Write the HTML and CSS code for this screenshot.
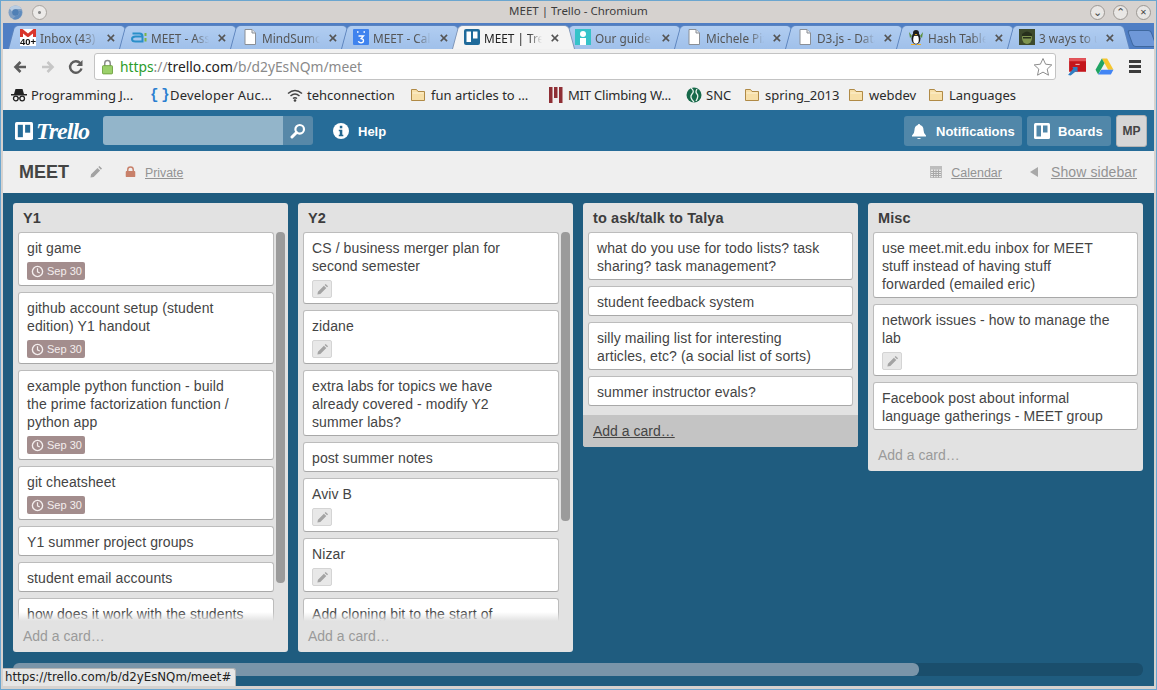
FILE: index.html
```html
<!DOCTYPE html>
<html lang="en">
<head>
	<meta charset="UTF-8">
	<title>MEET | Trello - Chromium</title>
	<link rel="stylesheet" href="styles.css">
</head>
<body>
<svg class="defs" width="0" height="0">
	<symbol id="doc" viewBox="0 0 16 16"><path d="M3 .5h7l3.500 3.500v11.500h-10.500z" fill="#fff" stroke="#8a8f96"/><path d="M10 .5v3.500h3.500" fill="#e4e6e9" stroke="#8a8f96"/></symbol>
	<symbol id="folder" viewBox="0 0 16 16"><path d="M1.500 13.500v-11h5l1.500 2h6.500v9z" fill="#f7dfa8" stroke="#b08a46"/><path d="M2.500 6h11" stroke="#fdf1d2"/></symbol>
	<symbol id="pencil" viewBox="0 0 14 14"><path d="M1.500 12.500l.6-3.200 6.400-6.400 2.600 2.600-6.400 6.400zM9.300 2.100l1.100-1.100 2.600 2.600-1.100 1.100z" fill="#a3a3a3"/></symbol>
	<symbol id="clock" viewBox="0 0 14 14"><circle cx="7" cy="7" r="5.500" fill="none" stroke="#f4eeee" stroke-width="1.500"/><path d="M7 3.500v3.800l2.400 1.300" fill="none" stroke="#f4eeee" stroke-width="1.300"/></symbol>
	<symbol id="boards" viewBox="0 0 16 16"><rect width="16" height="16" rx="1.500" fill="#fff"/><rect x="2.500" y="2.500" width="4.500" height="11" fill="currentColor"/><rect x="9" y="2.500" width="4.500" height="7" fill="currentColor"/></symbol>
</svg>

<div class="window">
	<!-- window title -->
	<div class="titlebar">
		<svg class="wm-logo" viewBox="0 0 16 16"><circle cx="8" cy="8" r="7.500" fill="#7f9fc4"/><path d="M8 .5a7.500 7.500 0 0 1 6.500 3.700h-6.500a4 4 0 0 0-3.800 2.800l-2.600-3.500a7.500 7.500 0 0 1 6.400-3z" fill="#b9cde3"/><circle cx="8" cy="8" r="3.500" fill="#4f7fb5"/><path d="M8 15.500a7.500 7.500 0 0 1-3-.6l3.500-3.400a3.500 3.500 0 0 0 3-5.500h3a7.500 7.500 0 0 1-6.500 9.500z" fill="#5f8bbd"/></svg>
		<span class="wm-pin"></span>
		<span class="wm-title">MEET | Trello - Chromium</span>
		<span class="wm-btn">&#8964;</span>
		<span class="wm-btn">&#8963;</span>
		<span class="wm-btn">&#215;</span>
	</div>

	<!-- browser tabs -->
	<div class="tabstrip">
		<div class="tab">
			<svg class="fav" viewBox="0 0 16 16"><rect x="0" y="0" width="16" height="10" fill="#fff"/><path d="M0 0h2.500l5.500 4.500 5.500-4.500h2.500v9h-3v-4.500l-5 4-5-4v4.500h-3z" fill="#d9352b"/></svg>
			<span class="fav-count">40+</span>
			<span class="tab-name">Inbox (43)</span><span class="tab-x">&#215;</span>
		</div>
		<div class="tab">
			<svg class="fav" viewBox="0 0 16 16"><path d="M1.500 4.500h7q3 0 3 3v5h-7q-3.500 0-3.500-2.500t3.500-2.500h6" fill="none" stroke="#2a8fc9" stroke-width="2"/><rect x="13.500" y="4" width="2" height="3" fill="#7cb342"/><rect x="13.500" y="9" width="2" height="3.500" fill="#7cb342"/></svg>
			<span class="tab-name">MEET - Assembla</span><span class="tab-x">&#215;</span>
		</div>
		<div class="tab">
			<svg class="fav"><use href="#doc"/></svg>
			<span class="tab-name">MindSumo</span><span class="tab-x">&#215;</span>
		</div>
		<div class="tab">
			<svg class="fav" viewBox="0 0 16 16"><rect width="16" height="16" rx="1" fill="#3f83ee"/><rect x="4" y="2" width="1.500" height="2" fill="#cfe0fb"/><rect x="10.500" y="2" width="1.500" height="2" fill="#cfe0fb"/><path d="M5.500 7h5l-2.300 2.500q2.300 .3 2.300 2.300 0 2-2.500 2-2 0-2.700-1.500" fill="none" stroke="#fff" stroke-width="1.300"/></svg>
			<span class="tab-name">MEET - Calendar</span><span class="tab-x">&#215;</span>
		</div>
		<div class="tab active">
			<svg class="fav boards-fav" viewBox="0 0 16 16"><rect width="16" height="16" rx="2" fill="#1f6a9a"/><rect x="2.500" y="2.500" width="4.500" height="10.500" fill="#fff"/><rect x="9" y="2.500" width="4.500" height="7" fill="#fff"/></svg>
			<span class="tab-name">MEET | Trello</span><span class="tab-x">&#215;</span>
		</div>
		<div class="tab">
			<svg class="fav" viewBox="0 0 16 16"><rect width="16" height="16" fill="#35c3c9"/><circle cx="8" cy="5" r="3" fill="#fff"/><rect x="5" y="9" width="6" height="7" fill="#fff"/></svg>
			<span class="tab-name">Our guide to</span><span class="tab-x">&#215;</span>
		</div>
		<div class="tab">
			<svg class="fav"><use href="#doc"/></svg>
			<span class="tab-name">Michele Pizzolato</span><span class="tab-x">&#215;</span>
		</div>
		<div class="tab">
			<svg class="fav"><use href="#doc"/></svg>
			<span class="tab-name">D3.js - Data</span><span class="tab-x">&#215;</span>
		</div>
		<div class="tab">
			<svg class="fav" viewBox="0 0 16 16"><ellipse cx="8" cy="9.500" rx="4.500" ry="6" fill="#1d1d1d"/><ellipse cx="8" cy="10.500" rx="2.800" ry="4.300" fill="#fff"/><circle cx="8" cy="4" r="3" fill="#1d1d1d"/><path d="M6.500 5h3l-1.500 1.500z" fill="#f2b01e"/><path d="M1 3l3 4-2 2zM15 3l-3 4 2 2z" fill="#5a8f3a"/><path d="M3 15h4v1h-4zM9 15h4v1h-4z" fill="#f2b01e"/></svg>
			<span class="tab-name">Hash Tables</span><span class="tab-x">&#215;</span>
		</div>
		<div class="tab">
			<svg class="fav" viewBox="0 0 16 16"><rect width="16" height="16" fill="#3d4a2c"/><ellipse cx="8" cy="9" rx="5" ry="6" fill="#7f9550"/><path d="M3 5q5-5 10 0v2h-10z" fill="#27301c"/><rect x="4" y="8" width="8" height="1.500" fill="#27301c"/></svg>
			<span class="tab-name">3 ways to use</span><span class="tab-x">&#215;</span>
		</div>
		<div class="tab-new"></div>
	</div>

	<!-- back / forward / address -->
	<div class="toolbar">
		<svg class="tool" viewBox="0 0 16 16"><path d="M14 8h-9M8.500 3l-5 5 5 5" fill="none" stroke="#5c5c5c" stroke-width="2.600"/></svg>
		<svg class="tool" viewBox="0 0 16 16"><path d="M2 8h9M7.500 3l5 5-5 5" fill="none" stroke="#c6c6c6" stroke-width="2.600"/></svg>
		<svg class="tool" viewBox="0 0 16 16"><path d="M13.500 9.500a5.800 5.800 0 1 1-1.200-5.300" fill="none" stroke="#5c5c5c" stroke-width="2.400"/><path d="M14.500 1v6h-6z" fill="#5c5c5c"/></svg>
		<div class="omnibox">
			<svg class="lock" viewBox="0 0 12 16"><path d="M3 7v-3a3 3 0 0 1 6 0v3" fill="none" stroke="#8c8c8c" stroke-width="1.600"/><rect x=".5" y="6.500" width="11" height="9" rx="1" fill="#9bd06a" stroke="#6ea13f"/></svg>
			<span class="url"><span class="https">https</span><span class="dim">://</span>trello.com<span class="dim">/b/d2yEsNQm/meet</span></span>
			<svg class="star" viewBox="0 0 20 20"><path d="M10 1.500l2.600 5.700 6.200.7-4.600 4.200 1.300 6.100-5.500-3.100-5.500 3.100 1.300-6.100-4.600-4.200 6.200-.7z" fill="#fff" stroke="#8d8d8d"/></svg>
		</div>
		<svg class="ext" viewBox="0 0 18 18"><rect x="2" y="1" width="16" height="13" fill="#c4161c"/><rect x="2" y="1" width="16" height="3" fill="#e2555a"/><path d="M8 7h4" stroke="#f3b9bb"/><path d="M1 17l5-6-1-1.500h5v5l-1.500-1-5 4z" fill="#2f7fc4"/></svg>
		<svg class="ext" viewBox="0 0 18 18"><path d="M6.500 1.500h5l6 10.500h-5z" fill="#f6c62d"/><path d="M6.500 1.500l-6 10.500 2.500 4.500 6-10.500z" fill="#1fa463"/><path d="M3 16.500l3-4.500h11.500l-2.500 4.500z" fill="#4285f4"/></svg>
		<div class="menu-btn"><span></span><span></span><span></span></div>
	</div>

	<!-- bookmarks -->
	<div class="bookmarks">
		<span class="mark m-hat">
			<svg class="fav" viewBox="0 0 16 16"><path d="M3 7l1.500-5h7l1.500 5z" fill="#222"/><rect x="0" y="7" width="16" height="1.500" fill="#222"/><circle cx="4.800" cy="11.500" r="2.300" fill="none" stroke="#222" stroke-width="1.300"/><circle cx="11.200" cy="11.500" r="2.300" fill="none" stroke="#222" stroke-width="1.300"/><path d="M7 11h2" stroke="#222"/></svg>
			Programming J...
		</span>
		<span class="mark m-dev"><span class="curly">{&#8201;}</span> Developer Auc...</span>
		<span class="mark m-teh">
			<svg class="fav" viewBox="0 0 16 16"><path d="M1 6.500q7-6 14 0M3.500 9q4.500-4 9 0M6 11.500q2-1.500 4 0" fill="none" stroke="#444" stroke-width="1.500"/><circle cx="8" cy="13.500" r="1.300" fill="#444"/></svg>
			tehconnection
		</span>
		<span class="mark m-fun"><svg class="fav folder-ico"><use href="#folder"/></svg> fun articles to …</span>
		<span class="mark m-mit">
			<svg class="fav" viewBox="0 0 16 16"><rect x="1" y="0" width="3.500" height="16" fill="#8f2f35"/><rect x="6" y="0" width="3.500" height="11" fill="#8f2f35"/><rect x="11" y="0" width="3.500" height="16" fill="#8f2f35"/></svg>
			MIT Climbing W...
		</span>
		<span class="mark m-snc">
			<svg class="fav" viewBox="0 0 16 16"><circle cx="8" cy="8" r="7.500" fill="#17694a"/><path d="M5 1q4 3 1 6t2 8M11 2q-2 3 0 5t-1 7" fill="none" stroke="#e8f2ec" stroke-width="1.300"/></svg>
			SNC
		</span>
		<span class="mark m-spring"><svg class="fav folder-ico"><use href="#folder"/></svg> spring_2013</span>
		<span class="mark m-webdev"><svg class="fav folder-ico"><use href="#folder"/></svg> webdev</span>
		<span class="mark"><svg class="fav folder-ico"><use href="#folder"/></svg> Languages</span>
	</div>

	<!-- trello header -->
	<div class="topbar">
		<a class="logo">
			<svg class="logo-mark"><use href="#boards"/></svg>
			<span class="logo-text">Trello</span>
		</a>
		<div class="search">
			<div class="search-input"></div>
			<div class="search-btn">
				<svg viewBox="0 0 16 16" width="16" height="16"><circle cx="9.700" cy="6.300" r="4.300" fill="none" stroke="#fff" stroke-width="2.200"/><path d="M6.500 9.500l-4.500 4.500" stroke="#fff" stroke-width="3" stroke-linecap="round"/></svg>
			</div>
		</div>
		<a class="help">
			<svg viewBox="0 0 16 16" width="16" height="16"><circle cx="8" cy="8" r="8" fill="#fff"/><rect x="6.800" y="2.800" width="2.500" height="2.500" fill="#24678f"/><path d="M5.800 6.800h3.500v5h1v1.500h-4.500v-1.500h1v-3.500h-1z" fill="#24678f"/></svg>
			<span class="top-label">Help</span>
		</a>
		<div class="topbar-right">
			<a class="top-btn notif">
				<svg viewBox="0 0 16 16" width="16" height="16"><path d="M8 1q1.200 0 1.200 1 3.300 1 3.300 5 0 3.500 2.500 5.500v1h-14v-1q2.500-2 2.500-5.500 0-4 3.300-5 0-1 1.200-1zM6 15h4q-.5 1-2 1t-2-1z" fill="#fff"/></svg>
				<span class="top-label">Notifications</span>
			</a>
			<a class="top-btn boards-btn">
				<svg class="boards-ico"><use href="#boards"/></svg>
				<span class="top-label">Boards</span>
			</a>
			<span class="avatar">MP</span>
		</div>
	</div>

	<!-- board title row -->
	<div class="boardhead">
		<h1>MEET</h1>
		<svg class="head-pencil"><use href="#pencil"/></svg>
		<svg class="head-lock" viewBox="0 0 12 12"><path d="M3 6v-2.500a3 3 0 0 1 6 0v2.500" fill="none" stroke="#c8806a" stroke-width="1.600"/><rect x=".8" y="5" width="10.400" height="6.500" rx="1" fill="#c8806a"/></svg>
		<a class="head-link">Private</a>
		<div class="head-right">
			<svg class="cal" viewBox="0 0 12 12"><path d="M0 0h12v12h-12z" fill="#bdbdbd"/><path d="M1 3.500h10v7.500h-10z" fill="#e6e6e6"/><path d="M1 5.500h10M1 7.500h10M1 9.500h10M3.500 3.500v8M6 3.500v8M8.500 3.500v8" stroke="#a8a8a8"/></svg>
			<a class="head-link cal-link">Calendar</a>
			<span class="tri"></span>
			<a class="head-link sidebar-link">Show sidebar</a>
		</div>
	</div>

	<!-- board -->
	<div class="board">
		<div class="lists">
			<div class="list full">
				<h2>Y1</h2>
				<div class="cards">
					<div class="card">git game<span class="due"><svg><use href="#clock"/></svg>Sep 30</span></div>
					<div class="card">github account setup (student edition) Y1 handout<span class="due"><svg><use href="#clock"/></svg>Sep 30</span></div>
					<div class="card">example python function - build the prime factorization function / python app<span class="due"><svg><use href="#clock"/></svg>Sep 30</span></div>
					<div class="card">git cheatsheet<span class="due"><svg><use href="#clock"/></svg>Sep 30</span></div>
					<div class="card">Y1 summer project groups</div>
					<div class="card">student email accounts</div>
					<div class="card">how does it work with the students</div>
					<div class="fade"></div>
					<div class="vbar bar-y1"></div>
				</div>
				<a class="add">Add a card…</a>
			</div>
			<div class="list full">
				<h2>Y2</h2>
				<div class="cards">
					<div class="card">CS / business merger plan for second semester<span class="note"><svg><use href="#pencil"/></svg></span></div>
					<div class="card">zidane<span class="note"><svg><use href="#pencil"/></svg></span></div>
					<div class="card">extra labs for topics we have already covered - modify Y2 summer labs?</div>
					<div class="card">post summer notes</div>
					<div class="card">Aviv B<span class="note"><svg><use href="#pencil"/></svg></span></div>
					<div class="card">Nizar<span class="note"><svg><use href="#pencil"/></svg></span></div>
					<div class="card">Add cloning bit to the start of</div>
					<div class="fade"></div>
					<div class="vbar bar-y2"></div>
				</div>
				<a class="add">Add a card…</a>
			</div>
			<div class="list wide">
				<h2>to ask/talk to Talya</h2>
				<div class="cards">
					<div class="card">what do you use for todo lists? task sharing? task management?</div>
					<div class="card">student feedback system</div>
					<div class="card">silly mailing list for interesting articles, etc? (a social list of sorts)</div>
					<div class="card">summer instructor evals?</div>
				</div>
				<a class="add hover">Add a card…</a>
			</div>
			<div class="list wide">
				<h2>Misc</h2>
				<div class="cards">
					<div class="card">use meet.mit.edu inbox for MEET stuff instead of having stuff forwarded (emailed eric)</div>
					<div class="card">network issues - how to manage the lab<span class="note"><svg><use href="#pencil"/></svg></span></div>
					<div class="card">Facebook post about informal language gatherings - MEET group</div>
				</div>
				<a class="add">Add a card…</a>
			</div>
		</div>
		<div class="hscroll"><div class="hthumb"></div></div>
	</div>

	<div class="status">https://trello.com/b/d2yEsNQm/meet#</div>
</div>
</body>
</html>
```

FILE: styles.css
```css
* {
    margin: 0;
    padding: 0;
    box-sizing: border-box;
}

html, body {
    width: 1157px;
    height: 690px;
    overflow: hidden;
}

body {
    font-family: "Liberation Sans", Arial, sans-serif;
    background: #d6d2cf;
}

.defs {
    position: absolute;
}

.window {
    position: relative;
    width: 1157px;
    height: 690px;
    padding: 0 2px 3px;
    display: flex;
    flex-direction: column;
    border: 1px solid #6ba6cf;
    background: #d6d2cf;
    overflow: hidden;
}

/* window manager title */
.titlebar {
    height: 22px;
    padding: 0 3px 0 5px;
    display: flex;
    align-items: center;
    gap: 8px;
    background: #d6d2cf;
    font: 11.500px "Noto Sans", sans-serif;
    color: #3c3c3c;
}

.wm-logo {
    width: 15px;
    height: 15px;
}

.wm-pin {
    width: 15px;
    height: 15px;
    margin-left: 1px;
    border-radius: 50%;
    border: 1px solid #a9a5a1;
    background: radial-gradient(circle, #8a8a8a 0, #8a8a8a 1px, #eceae8 2px);
}

.wm-title {
    flex: 1;
    text-align: center;
    padding-left: 20px;
    padding-bottom: 3px;
}

.wm-btn {
    width: 15px;
    height: 15px;
    border-radius: 50%;
    border: 1px solid #9b9793;
    background: #e9e7e5;
    font-size: 11px;
    line-height: 12px;
    text-align: center;
    color: #444;
}

/* tabs */
.tabstrip {
    height: 26px;
    padding-left: 5px;
    display: flex;
    background: #4f7ec4;
    font: 11.800px "Noto Sans", sans-serif;
    overflow: hidden;
}

.tab {
    position: relative;
    flex: none;
    width: 123px;
    height: 26px;
    margin-right: -12px;
    padding: 3px 0 0 12px;
    display: flex;
    align-items: center;
    color: #555;
}

.tab::before {
    content: "";
    position: absolute;
    left: 0;
    right: 0;
    top: -1px;
    bottom: 0;
    border: 1px solid #5d84bd;
    border-bottom: 0;
    border-radius: 5px 5px 0 0;
    background: linear-gradient(#b1cdf1, #a0c0ea);
    transform: perspective(40px) rotateX(10deg);
    transform-origin: bottom;
}

.tab.active {
    z-index: 2;
    color: #222;
}

.tab.active::before {
    background: #f4f4f4;
    border-color: #7f96b8;
}

.tab > * {
    position: relative;
}

.fav {
    flex: none;
    width: 16px;
    height: 16px;
}

.tab .fav {
    margin-top: -1px;
}

.tab .fav-count {
    position: absolute;
    left: 12px;
    top: 14px;
    width: 16px;
    font: bold 9.500px/9px "Liberation Sans", sans-serif;
    color: #111;
    background: #fff;
}

.tab-name {
    width: 58px;
    margin-left: 4px;
    white-space: nowrap;
    overflow: hidden;
    -webkit-mask-image: linear-gradient(90deg, #000 75%, transparent);
    mask-image: linear-gradient(90deg, #000 75%, transparent);
}

.tab-x {
    margin-left: 6px;
    width: 14px;
    text-align: center;
    font: bold 15px "Liberation Sans", sans-serif;
    color: #555;
}

.tab-new {
    position: relative;
    flex: none;
    width: 24px;
    height: 17px;
    margin: 7px 0 0 12px;
    background: #6f98d8;
    border: 1px solid #3f689f;
    border-radius: 3px;
    transform: skewX(20deg);
}

/* toolbar */
.toolbar {
    height: 34px;
    padding: 4px 0 3px 9px;
    display: flex;
    align-items: center;
    background: #f1f1f1;
}

.tool {
    width: 16px;
    height: 16px;
    margin-right: 12px;
    flex: none;
}

.omnibox {
    width: 962px;
    height: 27px;
    margin-left: -2px;
    padding: 0 2px 0 7px;
    display: flex;
    align-items: center;
    border: 1px solid #c3c3c3;
    border-radius: 3px;
    background: #fff;
}

.lock {
    width: 11px;
    height: 16px;
    flex: none;
}

.url {
    flex: 1;
    margin-left: 7px;
    font: 13.800px "Noto Sans", sans-serif;
    color: #222;
}

.https {
    color: #2a9c2a;
}

.dim {
    color: #8a8a8a;
}

.star {
    width: 20px;
    height: 20px;
}

.ext {
    width: 19px;
    height: 19px;
    flex: none;
    margin-left: 11px;
}

.ext + .ext {
    margin-left: 9px;
}

.menu-btn {
    margin-left: 15px;
    width: 12px;
    display: flex;
    flex-direction: column;
    gap: 2px;
}

.menu-btn span {
    height: 3px;
    background: #3c3c3c;
}

/* bookmarks */
.bookmarks {
    height: 27px;
    padding: 0 0 3px 8px;
    display: flex;
    align-items: center;
    background: #f1f1f1;
    font: 13px "Noto Sans", sans-serif;
    color: #2a2a2a;
}

.mark {
    flex: none;
    display: flex;
    align-items: center;
    gap: 4px;
    white-space: nowrap;
}

.folder-ico {
    margin-right: 1px;
}

.m-hat { width: 139px; }
.m-dev { width: 137px; letter-spacing: .2px; }
.m-teh { width: 123px; }
.m-fun { width: 138px; }
.m-mit { width: 138px; letter-spacing: -.2px; }
.m-snc { width: 58px; }
.m-spring { width: 104px; }
.m-webdev { width: 80px; }

.curly {
    width: 16px;
    letter-spacing: 0;
    font: bold 14px "Liberation Mono", monospace;
    color: #2b7fd0;
}

/* trello header */
.topbar {
    height: 41px;
    padding: 0 7px 0 12px;
    display: flex;
    align-items: center;
    background: #266c98;
    color: #fff;
    font-size: 13px;
    font-weight: bold;
}

.top-label {
    padding-top: 2px;
}

.logo {
    width: 88px;
    display: flex;
    align-items: center;
    gap: 3px;
}

.logo-mark {
    width: 18px;
    height: 18px;
    color: #266c98;
}

.logo-text {
    font: italic bold 24px/30px "Liberation Serif", serif;
    letter-spacing: -1px;
}

.search {
    width: 210px;
    height: 29px;
    display: flex;
    border-radius: 3px;
    overflow: hidden;
}

.search-input {
    flex: 1;
    background: #93b5ca;
}

.search-btn {
    width: 30px;
    display: flex;
    align-items: center;
    justify-content: center;
    background: #5788a8;
}

.help {
    margin-left: 20px;
    display: flex;
    align-items: center;
    gap: 9px;
}

.topbar-right {
    margin-left: auto;
    display: flex;
    align-items: center;
    gap: 5px;
}

.top-btn {
    height: 30px;
    display: flex;
    align-items: center;
    border-radius: 3px;
    background: #5187a9;
}

.notif {
    width: 118px;
    padding-left: 7px;
    gap: 9px;
}

.boards-btn {
    width: 84px;
    padding-left: 7px;
    gap: 8px;
}

.boards-ico {
    width: 16px;
    height: 16px;
    color: #5187a9;
}

.avatar {
    width: 31px;
    height: 32px;
    border: 1px solid #b4b4b4;
    border-radius: 3px;
    background: #d6d6d6;
    color: #444;
    text-align: center;
    line-height: 30px;
    font-size: 12px;
}

/* board title row */
.boardhead {
    height: 42px;
    padding: 0 17px 0 16px;
    display: flex;
    align-items: center;
    background: #efefef;
    color: #999;
}

.boardhead h1 {
    font-size: 18px;
    color: #444;
    margin-right: 20px;
}

.head-pencil {
    width: 14px;
    height: 14px;
}

.head-lock {
    width: 11px;
    height: 12px;
    margin-left: 22px;
}

.head-link {
    margin-left: 9px;
    padding-top: 2px;
    font-size: 12.300px;
    text-decoration: underline;
    color: #939393;
}

.head-right {
    margin-left: auto;
    display: flex;
    align-items: center;
}

.cal {
    width: 12px;
    height: 12px;
}

.cal-link {
    margin-left: 9px;
    font-size: 12.500px;
}

.tri {
    margin-left: 28px;
    border: 5px solid transparent;
    border-left: 0;
    border-right: 8px solid #a8a8a8;
}

.sidebar-link {
    margin-left: 13px;
    padding-top: 0;
    font-size: 14px;
    letter-spacing: .1px;
}

/* board */
.board {
    flex: 1;
    min-height: 0;
    padding: 10px 0 0 10px;
    background: #1f5c7f;
}

.lists {
    height: 449px;
    display: flex;
    align-items: flex-start;
    gap: 10px;
}

.list {
    width: 275px;
    flex: none;
    display: flex;
    flex-direction: column;
    border-radius: 3px;
    background: #e2e2e2;
    color: #444;
    overflow: hidden;
}

.list.full {
    height: 449px;
}

.list h2 {
    height: 29px;
    padding: 7px 10px 0;
    font-size: 14.500px;
    line-height: 17px;
    letter-spacing: .1px;
    color: #3d3d3d;
}

.cards {
    position: relative;
    flex: 1;
    min-height: 0;
    padding: 0 5px;
    overflow: hidden;
}

.full .cards {
    padding-right: 14px;
}

.card {
    margin-bottom: 6px;
    padding: 6px 9px 4px 8px;
    background: #fff;
    border: 1px solid #bcbcbc;
    border-bottom-color: #a8a8a8;
    border-radius: 3px;
    font-size: 14px;
    line-height: 18px;
    letter-spacing: .1px;
    color: #444;
}

.full .card {
    padding-right: 26px;
}

.wide .card {
    padding-right: 22px;
}

.wide .cards {
    padding-bottom: 3px;
}

.due,
.note {
    display: flex;
    align-items: center;
    margin: 5px 0 1px;
    height: 18px;
    border-radius: 2px;
    letter-spacing: 0;
}

.due {
    width: 58px;
    padding-left: 4px;
    gap: 3px;
    background: #a38d8d;
    color: #f4eeee;
    font-size: 11px;
}

.due svg {
    width: 13px;
    height: 13px;
}

.note {
    width: 20px;
    justify-content: center;
    background: #e8e8e8;
    border: 1px solid #d4d4d4;
}

.note svg {
    width: 13px;
    height: 13px;
}

/* the scrolled-off edge of a long list */
.fade {
    position: absolute;
    left: 5px;
    right: 14px;
    bottom: 0;
    height: 9px;
    background: linear-gradient(rgba(226, 226, 226, 0), #e2e2e2);
}

.vbar {
    position: absolute;
    top: 0;
    right: 3px;
    width: 9px;
    border-radius: 4px;
    background: #9b9b9b;
}

.bar-y1 {
    height: 351px;
}

.bar-y2 {
    height: 289px;
}

.add {
    height: 31px;
    padding: 6px 10px 0;
    font-size: 14px;
    line-height: 18px;
    color: #9a9a9a;
    flex: none;
}

.wide .add {
    height: 32px;
    padding-top: 7px;
}

.add.hover {
    background: #c4c4c4;
    color: #444;
    text-decoration: underline;
}

.hscroll {
    width: 1130px;
    height: 13px;
    margin-top: 11px;
    border-radius: 6px;
    background: #1a4e6c;
}

.hthumb {
    width: 906px;
    height: 13px;
    border-radius: 6px;
    background: #7a95a9;
}

.status {
    position: absolute;
    left: 2px;
    bottom: 3px;
    width: 233px;
    height: 18px;
    padding-left: 2px;
    border: 1px solid #b4b4b4;
    border-left: 0;
    border-bottom: 0;
    border-radius: 0 3px 0 0;
    background: #e6e6e6;
    font: 11.800px/17px "DejaVu Sans", sans-serif;
    color: #222;
    white-space: nowrap;
}
```
